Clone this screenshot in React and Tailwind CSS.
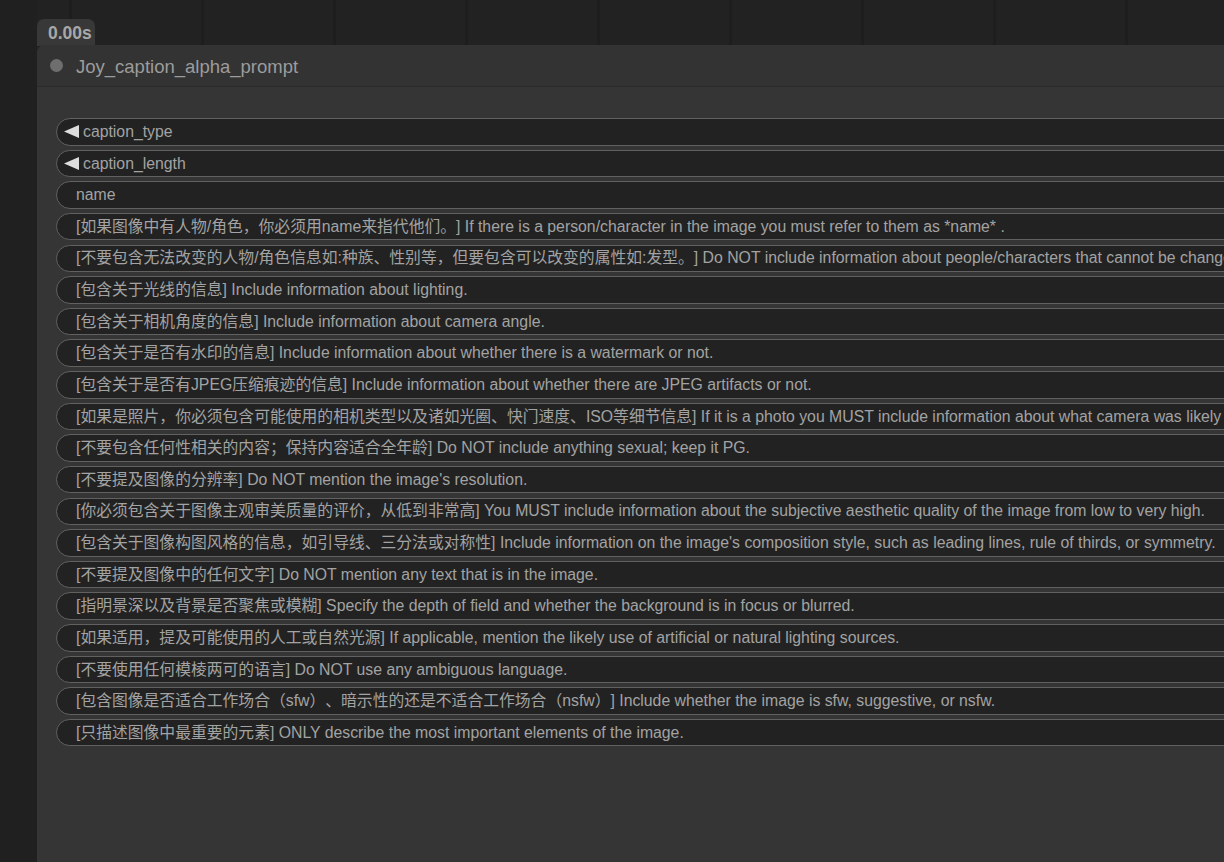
import React from "react";

const rows = [
  { arrow: true, text: "caption_type" },
  { arrow: true, text: "caption_length" },
  { text: "name" },
  { text: "[如果图像中有人物/角色，你必须用name来指代他们。] If there is a person/character in the image you must refer to them as *name* ." },
  { text: "[不要包含无法改变的人物/角色信息如:种族、性别等，但要包含可以改变的属性如:发型。] Do NOT include information about people/characters that cannot be changed (like ethnicity, gender, etc), but do still include changeable attributes (like hair style)." },
  { text: "[包含关于光线的信息] Include information about lighting." },
  { text: "[包含关于相机角度的信息] Include information about camera angle." },
  { text: "[包含关于是否有水印的信息] Include information about whether there is a watermark or not." },
  { text: "[包含关于是否有JPEG压缩痕迹的信息] Include information about whether there are JPEG artifacts or not." },
  { text: "[如果是照片，你必须包含可能使用的相机类型以及诸如光圈、快门速度、ISO等细节信息] If it is a photo you MUST include information about what camera was likely used and details such as aperture, shutter speed, ISO, etc." },
  { text: "[不要包含任何性相关的内容；保持内容适合全年龄] Do NOT include anything sexual; keep it PG." },
  { text: "[不要提及图像的分辨率] Do NOT mention the image's resolution." },
  { text: "[你必须包含关于图像主观审美质量的评价，从低到非常高] You MUST include information about the subjective aesthetic quality of the image from low to very high." },
  { text: "[包含关于图像构图风格的信息，如引导线、三分法或对称性] Include information on the image's composition style, such as leading lines, rule of thirds, or symmetry." },
  { text: "[不要提及图像中的任何文字] Do NOT mention any text that is in the image." },
  { text: "[指明景深以及背景是否聚焦或模糊] Specify the depth of field and whether the background is in focus or blurred." },
  { text: "[如果适用，提及可能使用的人工或自然光源] If applicable, mention the likely use of artificial or natural lighting sources." },
  { text: "[不要使用任何模棱两可的语言] Do NOT use any ambiguous language." },
  { text: "[包含图像是否适合工作场合（sfw）、暗示性的还是不适合工作场合（nsfw）] Include whether the image is sfw, suggestive, or nsfw." },
  { text: "[只描述图像中最重要的元素] ONLY describe the most important elements of the image." },
];

function Row({ arrow, text }) {
  return (
    <div className="h-[27.5px] shrink-0 rounded-full border border-[#616161] bg-[#222222] flex items-center overflow-hidden whitespace-nowrap">
      {arrow ? (
        <>
          <svg width="15" height="13" viewBox="0 0 15 13" className="ml-[7px] shrink-0">
            <polygon points="0,6.5 15,0 15,13" fill="#dddddd" />
          </svg>
          <span className="ml-[4px] text-[#a3a3a3]">{text}</span>
        </>
      ) : (
        <span className="ml-[19px] text-[#a3a3a3]">{text}</span>
      )}
    </div>
  );
}

export default function App() {
  return (
    <div
      className="relative w-[1224px] h-[862px] overflow-hidden bg-[#222222] bg-[linear-gradient(90deg,transparent_69px,#1e1e1e_69px,#1e1e1e_72px,transparent_72px)] bg-[size:132px_100%] [text-spacing-trim:space-all]"
      style={{ fontFamily: '"Liberation Sans", Arial, "Noto Sans CJK SC", sans-serif' }}
    >
      <div className="absolute left-0 top-0 w-[37px] h-full bg-[#202020]" />

      {/* timing badge */}
      <div className="absolute left-[37px] top-[19px] w-[58px] h-[27px] rounded-t-[7px] bg-[#383838] flex items-center pl-[11px] text-[17.5px] font-bold text-[#a8a8a8] pt-[1px]">
        0.00s
      </div>

      {/* node */}
      <div className="absolute left-[37px] top-[45px] w-[1400px] h-[860px] rounded-tl-[8px] bg-[#353535] flex flex-col overflow-hidden">
        <div className="h-[42px] shrink-0 bg-[#333333] border-b border-[#2b2b2b] flex items-center">
          <div className="ml-[13px] w-[13px] h-[13px] rounded-full bg-[#6e6e6e]" />
          <span className="ml-[13px] text-[18.5px] text-[#9c9c9c] pt-[2px]">Joy_caption_alpha_prompt</span>
        </div>
        <div className="pt-[31px] pl-[19px] flex flex-col gap-[4.13px] text-[15.8px]">
          {rows.map((r, i) => (
            <Row key={i} {...r} />
          ))}
        </div>
      </div>
    </div>
  );
}
